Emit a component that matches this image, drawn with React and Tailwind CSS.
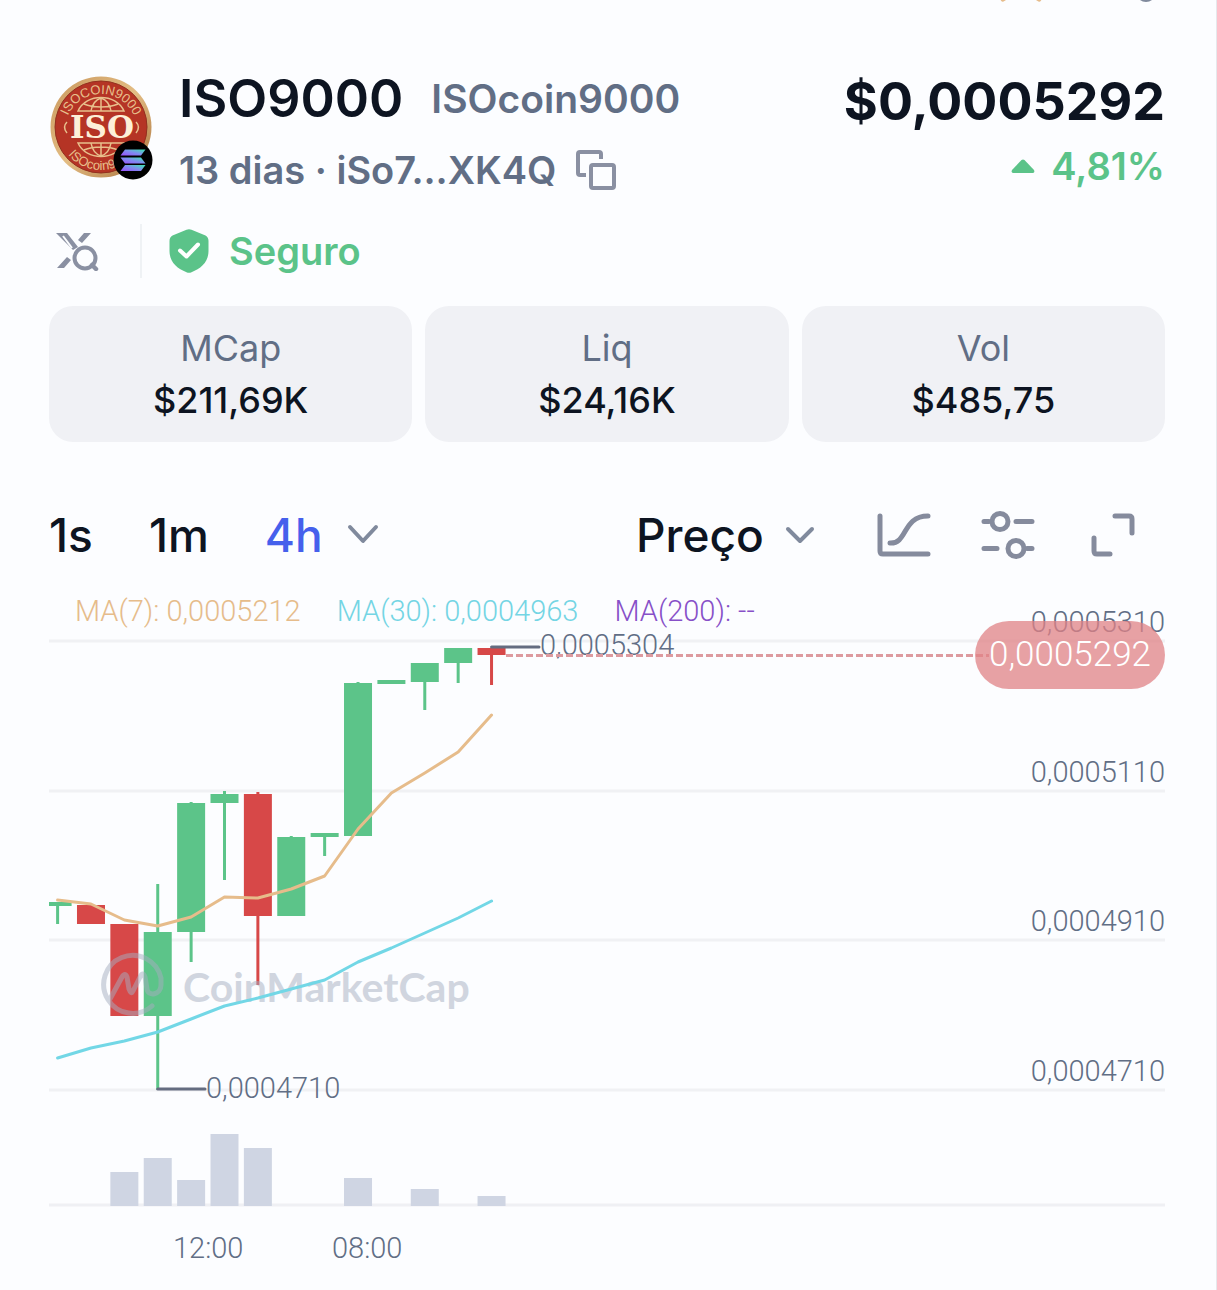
import React from "react";
import { ChevronDown } from "lucide-react";

const stats = [
  { label: "MCap", value: "$211,69K" },
  { label: "Liq", value: "$24,16K" },
  { label: "Vol", value: "$485,75" },
];

const averages = [
  { text: "MA(7): 0,0005212", color: "text-[#e6bc8b]" },
  { text: "MA(30): 0,0004963", color: "text-[#74d5e4]" },
  { text: "MA(200): --", color: "text-[#8750c8]" },
];

// [wick top, body top, body bottom, wick bottom, up]
const candles = [
  [271, 271, 275, 293, true],
  [274, 274, 293, 293, false],
  [293, 293, 385, 385, false],
  [253, 301, 385, 459, true],
  [171, 172, 301, 331, true],
  [160, 163, 172, 249, true],
  [161, 163, 285, 354, false],
  [205, 206, 285, 285, true],
  [202, 202, 206, 225, true],
  [51, 52, 205, 205, true],
  [49, 49, 53, 53, true],
  [32, 32, 51, 79, true],
  [17, 17, 32, 52, true],
  [17, 17, 24, 54, false],
];

const ma7 = [269, 273, 289, 295, 286, 266, 267, 258, 245, 198, 162, 142, 121, 84];
const ma30 = [427, 417, 410, 401, 388, 375, 367, 358, 349, 331, 317, 302, 287, 270];
const volumes = [0, 0, 34, 48, 26, 72, 58, 0, 0, 28, 0, 17, 0, 10];

const gridLines = [
  { y: 10, label: "0,0005310" },
  { y: 160, label: "0,0005110" },
  { y: 309, label: "0,0004910" },
  { y: 459, label: "0,0004710" },
];

const centerX = (i) => 8.6 + i * 33.38;
const toPoints = (values) => values.map((y, i) => `${centerX(i)},${y}`).join(" ");

function CoinLogo() {
  return (
    <svg viewBox="0 0 104 104" className="size-[104px] shrink-0" role="img" aria-label="ISOcoin9000">
      <defs>
        <linearGradient id="rim" x1="0" y1="0" x2="1" y2="1">
          <stop offset="0" stopColor="#c9975c" />
          <stop offset="0.5" stopColor="#e3bd84" />
          <stop offset="1" stopColor="#a8703a" />
        </linearGradient>
        <linearGradient id="sol" x1="0" y1="1" x2="1" y2="0">
          <stop offset="0" stopColor="#9a4dfb" />
          <stop offset="0.5" stopColor="#7f8cf0" />
          <stop offset="1" stopColor="#3be8b0" />
        </linearGradient>
        <path id="arcTop" d="M16 54 A36 36 0 0 1 88 54" />
        <path id="arcBottom" d="M9 51 A43 43 0 0 0 95 51" />
      </defs>
      <circle cx="52" cy="51" r="50.5" fill="url(#rim)" />
      <circle cx="52" cy="51" r="46" fill="#b53425" stroke="#92301f" strokeWidth="1" />
      <g fill="none" stroke="#e8c08c" strokeWidth="1.5">
        <path d="M29 35 C37 17 67 17 75 35 Z" />
        <path d="M52 22 V35 M42 35 C43 29 46 24 52 22 C58 24 61 29 62 35 M35 28 C44 32 60 32 69 28" />
        <path d="M29 67 C37 85 67 85 75 67 Z" />
        <path d="M52 80 V67 M42 67 C43 73 46 78 52 80 C58 78 61 73 62 67 M35 74 C44 70 60 70 69 74" />
        <path d="M18 46 Q13 51 18 57 M87 46 Q92 51 87 57" />
      </g>
      <text fontFamily="Liberation Sans" fontSize="13" fill="#e8c08c">
        <textPath href="#arcTop" startOffset="50%" textAnchor="middle">ISOCOIN9000</textPath>
      </text>
      <text fontFamily="Liberation Sans" fontSize="13" fill="#e8c08c">
        <textPath href="#arcBottom" startOffset="50%" textAnchor="middle">ISOcoin9000</textPath>
      </text>
      <text x="53" y="62" textAnchor="middle" fontFamily="DejaVu Serif" fontWeight="700" fontSize="31" fill="#fdf0d8">
        ISO
      </text>
      <circle cx="84" cy="84" r="19.5" fill="#000" />
      <g fill="url(#sol)">
        <path d="M76 73.5 H96.5 L92 79.5 H71.5 Z" />
        <path d="M71.5 81.5 H92 L96.5 87.5 H76 Z" />
        <path d="M76 89 H96.500 L92 95 H71.5 Z" />
      </g>
    </svg>
  );
}

function TokenHeader() {
  return (
    <section className="flex items-start">
      <div className="pt-3">
        <CoinLogo />
      </div>
      <div className="ml-[26px] flex-1">
        <div className="flex h-[70px] items-center gap-7">
          <h1 className="text-[52px] leading-[70px] font-semibold text-[#0d1421]">ISO9000</h1>
          <span className="text-[39px] font-semibold text-[#616e85]">ISOcoin9000</span>
        </div>
        <div className="flex h-[72px] items-center gap-5 text-[38px] font-semibold text-[#616e85]">
          <span>13 dias · iSo7...XK4Q</span>
          <button type="button" aria-label="Copiar endereço">
            <svg viewBox="0 0 40 40" className="size-10" fill="none" stroke="#8a90a2" strokeWidth="4" strokeLinejoin="round">
              <path d="M10 25 H4 A2 2 0 0 1 2 23 V4 A2 2 0 0 1 4 2 H23 A2 2 0 0 1 25 4 V9" />
              <rect x="15" y="15" width="23" height="23" rx="2" />
            </svg>
          </button>
        </div>
      </div>
      <div className="text-right">
        <p className="text-[52px] leading-[76px] font-bold text-[#0d1421]">$0,0005292</p>
        <p className="flex items-center justify-end gap-4 text-[38px] leading-[52px] font-semibold text-[#5bc389]">
          <svg viewBox="0 0 24 14" className="h-[14px] w-6" fill="currentColor">
            <path d="M10.5 1 Q12 0 13.5 1 L23 11 Q24 13.5 22 14 H2 Q0 13.5 1 11 Z" />
          </svg>
          4,81%
        </p>
      </div>
    </section>
  );
}

function SafetyRow() {
  return (
    <section className="mt-[18px] flex h-[54px] items-center">
      <button type="button" aria-label="Buscar no X" className="ml-[7px]">
        <svg viewBox="0 0 44 40" className="h-10 w-11" fill="none" stroke="#8a90a2">
          <path d="M0 2 H11 L22 16 L17 19 Z" fill="#8a90a2" stroke="none" />
          <path d="M7 5 L16 17" stroke="#fcfdff" strokeWidth="2" />
          <path d="M28 2 H35 L26 12 L22 9 Z M11 26 L15 29 L8 37 H1 Z" fill="#8a90a2" stroke="none" />
          <circle cx="29" cy="27" r="10.5" strokeWidth="4" />
          <path d="M36 34 L40 38" strokeWidth="4.5" strokeLinecap="round" />
        </svg>
      </button>
      <div className="ml-10 h-full w-[2px] bg-[#eff2f5]" />
      <div className="ml-[27px] flex items-center gap-5 text-[38px] font-semibold text-[#5bc389]">
        <svg viewBox="0 0 40 44" className="h-11 w-10">
          <path
            d="M17.5 0.8 Q20 -0.5 22.5 0.8 L36.5 6.5 Q39.500 8 39.500 12 V22 C39.500 33 32 39.5 22.5 43.2 Q20 44.3 17.5 43.2 C8 39.5 0.5 33 0.5 22 V12 Q0.5 8 3.5 6.5 Z"
            fill="#5bc389"
          />
          <path d="M11 21.5 L17.5 27.5 L29 15.5" fill="none" stroke="#fff" strokeWidth="4" strokeLinecap="round" strokeLinejoin="round" />
        </svg>
        Seguro
      </div>
    </section>
  );
}

function Toolbar() {
  return (
    <section className="mt-[69px] flex h-12 items-center justify-between pr-[30px] text-[46px] font-medium text-[#0d1421]">
      <div className="flex items-center gap-14">
        <button type="button">1s</button>
        <button type="button">1m</button>
        <div className="flex items-center gap-5">
          <button type="button" className="text-[#4560ec]">4h</button>
          <button type="button" aria-label="Mais intervalos" className="text-[#808a9d]">
            <svg viewBox="0 0 40 40" className="size-10" fill="none" stroke="currentColor" strokeWidth="4" strokeLinecap="round" strokeLinejoin="round">
              <path d="M7 12 L20 26 L33 12" />
            </svg>
          </button>
        </div>
      </div>
      <div className="flex items-center">
        <label className="flex items-center">
          <select aria-label="Tipo de dado" className="w-[140px] appearance-none bg-transparent" defaultValue="preco">
            <option value="preco">Preço</option>
            <option value="mcap">MCap</option>
          </select>
          <ChevronDown className="size-12 text-[#808a9d]" strokeWidth={2} />
        </label>
        <button type="button" aria-label="Tipo de gráfico" className="ml-[53px]">
          <svg viewBox="0 0 54 44" className="h-11 w-[54px]" fill="none" stroke="#858b9d" strokeWidth="5" strokeLinecap="round" strokeLinejoin="round">
            <path d="M3 3 V38 Q3 41 6 41 H51" />
            <path d="M13 30 C31 31 25 3 51 3" />
          </svg>
        </button>
        <button type="button" aria-label="Indicadores" className="ml-[50px]">
          <svg viewBox="0 0 54 48" className="h-12 w-[54px]" fill="none" stroke="#858b9d" strokeWidth="5" strokeLinecap="round">
            <circle cx="19" cy="10.5" r="8" />
            <path d="M3 10.5 H8 M35 10.5 H51" />
            <circle cx="35" cy="37.5" r="8" />
            <path d="M3 37.5 H16 M46 37.5 H51" />
          </svg>
        </button>
        <button type="button" aria-label="Tela cheia" className="ml-14">
          <svg viewBox="0 0 44 44" className="size-11" fill="none" stroke="#858b9d" strokeWidth="5" strokeLinecap="round" strokeLinejoin="round">
            <path d="M24 3 H38 Q41 3 41 6 V20" />
            <path d="M3 25 V38 Q3 41 6 41 H19" />
          </svg>
        </button>
      </div>
    </section>
  );
}

function PriceChart() {
  return (
    <section className="relative font-['Roboto',sans-serif] font-light">
      <svg className="block h-[640px] w-full overflow-visible" fontSize="29" fill="#616e85">
        {gridLines.map((line) => (
          <g key={line.y}>
            <line x1="0" x2="100%" y1={line.y} y2={line.y} stroke="#f0f1f4" strokeWidth="3" />
            <text x="100%" y={line.y - 9} textAnchor="end">
              {line.label}
            </text>
          </g>
        ))}
        <line x1="0" x2="100%" y1="574" y2="574" stroke="#eff0f4" strokeWidth="3" />

        {volumes.map((v, i) => (
          <rect key={i} x={centerX(i) - 14} y={575 - v} width="28" height={v} fill="#cfd5e3" />
        ))}

        {candles.map(([high, top, bottom, low, up], i) => {
          const left = Math.max(0, centerX(i) - 14);
          return (
            <g key={i} fill={up ? "#5cc489" : "#d74848"}>
              <rect x={centerX(i) - 1.5} y={high} width="3" height={low - high} />
              <rect x={left} y={top} width={centerX(i) + 14 - left} height={bottom - top} />
            </g>
          );
        })}

        {/* watermark */}
        <g opacity="0.5">
          <path
            d="M103 375 A29 29 0 1 1 112 347 V354 C112 364 99 366 98 358 L96 346 Q94 340 91 346 L84 360 Q82 364 80 358 L78 346 Q76 341 73 346 L61 368"
            fill="none"
            stroke="#a6aec0"
            strokeWidth="5"
            strokeLinecap="round"
            strokeLinejoin="round"
          />
          <text x="134" y="371" fontFamily="Lato" fontWeight="700" fontSize="41" fill="#a6aec0">
            CoinMarketCap
          </text>
        </g>

        <g fill="none" strokeWidth="3" strokeLinecap="round" strokeLinejoin="round">
          <polyline points={toPoints(ma7)} stroke="#e6bc8b" />
          <polyline points={toPoints(ma30)} stroke="#72d7e6" />
          <path d={`M${centerX(13)} 16 H490 M${centerX(3)} 458 H156`} stroke="#646c80" />
        </g>
        <text x="491" y="24">0,0005304</text>
        <text x="157" y="467">0,0004710</text>
        <text x="124" y="627">12:00</text>
        <text x="283" y="627">08:00</text>
      </svg>

      {/* last price marker */}
      <div className="absolute -top-[10px] right-0 left-[457px] flex h-[68px] items-center">
        <div className="-mr-[14px] h-[3px] flex-1 bg-[repeating-linear-gradient(90deg,#dd9a9f_0_7px,transparent_7px_10px)]" />
        <span className="flex h-full items-center rounded-full bg-[#e08286]/75 px-[14px] text-[35px] text-white">
          0,0005292
        </span>
      </div>
    </section>
  );
}

export default function App() {
  return (
    <main className="min-h-screen border-r border-[#e6e8ec] bg-[#fcfdff] pr-[51px] pl-[49px] font-['Inter',sans-serif]">
      <div className="flex h-1 justify-end gap-24 pr-3">
        <button type="button" aria-label="Favorito" className="h-1">
          <svg viewBox="0 0 44 4" className="block h-1 w-11" fill="none" stroke="#e6bc8b" strokeWidth="5" strokeLinecap="round">
            <path d="M4 -1 L10 -5 M40 -1 L34 -5" />
          </svg>
        </button>
        <button type="button" aria-label="Compartilhar" className="h-1">
          <svg viewBox="0 0 14 4" className="block h-1 w-[14px]" fill="none" stroke="#808a9d" strokeWidth="4">
            <circle cx="7" cy="-8" r="8" />
          </svg>
        </button>
      </div>

      <div className="mt-[60px]">
        <TokenHeader />
        <SafetyRow />

        <dl className="mt-7 grid grid-cols-3 gap-[13px]">
          {stats.map((s) => (
            <div key={s.label} className="rounded-3xl bg-[#f0f1f5] py-4 text-center text-[36px] leading-[52px]">
              <dt className="text-[#616e85]">{s.label}</dt>
              <dd className="font-medium text-[#0d1421]">{s.value}</dd>
            </div>
          ))}
        </dl>

        <Toolbar />

        <div className="mt-8 flex gap-9 pl-[26px] font-['Roboto',sans-serif] text-[29px] leading-10 font-light">
          {averages.map((m) => (
            <span key={m.text} className={m.color}>
              {m.text}
            </span>
          ))}
        </div>
        <PriceChart />
      </div>
    </main>
  );
}
